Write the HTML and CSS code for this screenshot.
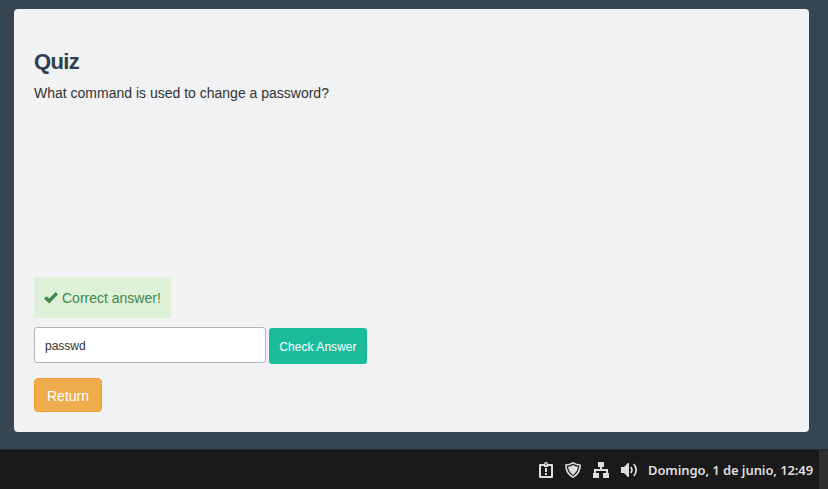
FILE: index.html
```html
<!DOCTYPE html>
<html lang="en">
<head>
<meta charset="utf-8">
<title>Quiz</title>
<link rel="stylesheet" href="styles.css">
</head>
<body>
<main class="page">
  <section class="card">
    <h1 class="title">Quiz</h1>
    <p class="question">What command is used to change a password?</p>
    <div class="feedback">
      <svg class="check" viewBox="0 0 14 12"><path d="M0 6.7 2.5 4.2 5.2 6.6 11.7 0 14 2.3 5.3 11.6Z"/></svg>
      <span>Correct answer!</span>
    </div>
    <form class="answer">
      <input class="field" type="text" value="passwd">
      <button class="submit" type="button">Check Answer</button>
    </form>
    <button class="return" type="button">Return</button>
  </section>
</main>
<footer class="taskbar">
  <div class="tray">
    <svg class="icon" width="14" height="16" viewBox="0 0 14 16"><path fill-rule="evenodd" d="M1 2h4a2 2 0 0 1 4 0H13q1 0 1 1v12q0 1-1 1H1q-1 0-1-1V3q0-1 1-1ZM2 4v10h10V4H9v1H5V4ZM6.300 1.500v1.200h1.400v-1.200ZM6 6h2v4H6ZM6 11h2v2H6Z"/></svg>
    <svg class="icon" width="16" height="16" viewBox="0 0 16 16"><path fill-rule="evenodd" d="M8 0Q11.5 2.2 16 2.4 16 12 8 16 0 12 0 2.4 4.500 2.200 8 0ZM8 1.700Q5 3.300 1.600 3.700 2.300 10.900 8 14.300 13.700 10.900 14.400 3.700 11 3.300 8 1.700Z"/><path d="M8 3Q10.300 4.500 13 4.800 12.400 10 8 13 3.600 10 3 4.800 5.700 4.500 8 3Z"/></svg>
    <svg class="icon" width="16" height="16" viewBox="0 0 16 16"><path d="M5 0h6v5H9v2h6v4h1v5h-6v-5h3V9H3v2h3v5H0v-5h1V7h6V5H5Z"/></svg>
    <svg class="icon" width="17" height="14" viewBox="0 0 17 14"><path d="M0 4h3l4-4h1v14H7l-4-4H0Z"/><path class="wave" d="M9.800 4q2.200 3 0 6M12.800 1q4.800 6 0 12"/></svg>
  </div>
  <time class="clock">Domingo, 1 de junio, 12:49</time>
  <div class="edge"></div>
</footer>
</body>
</html>
```
FILE: styles.css
```css
* { box-sizing: border-box; }
body {
  margin: 0;
  height: 489px;
  display: flex;
  flex-direction: column;
  overflow: hidden;
  background: #364652;
  font-family: "Liberation Sans", Arial, sans-serif;
  color: #333;
}
.page { height: 449px; padding: 9px 19px 17px 14px; }
.card {
  height: 423px;
  padding: 40px 20px 20px;
  display: flex;
  flex-direction: column;
  align-items: flex-start;
  background: #f0f2f4;
  border-radius: 4px;
}
.title { margin: 0; font-size: 22px; line-height: 25px; font-weight: bold; letter-spacing: -0.6px; color: #2c3e50; }
.question { margin: 9px 0 0; font-size: 14px; line-height: 20px; }
.feedback {
  margin-top: auto;
  height: 41px;
  width: 137px;
  padding: 1px 0 0 10px;
  display: flex;
  align-items: center;
  gap: 4px;
  background: #dff0d8;
  color: #3c8a4a;
  font-size: 14px;
  line-height: 20px;
  white-space: nowrap;
}
.check { width: 14px; height: 12px; flex: none; fill: currentColor; }
.answer { display: flex; gap: 3px; margin: 9px 0 14px; }
.field {
  width: 232px;
  height: 36px;
  padding: 2px 10px 0;
  border: 1px solid #b5b7ba;
  border-radius: 3px;
  background: #fff;
  color: #333;
  font: 12px "Liberation Sans", Arial, sans-serif;
}
.submit {
  width: 98px;
  height: 36px;
  margin-top: 1px;
  padding: 2px 0 0;
  border: 0;
  border-radius: 3px;
  background: #1abc9c;
  color: #fff;
  font: 12px "Liberation Sans", Arial, sans-serif;
  letter-spacing: 0.05px;
}
.return {
  width: 68px;
  height: 34px;
  padding: 2px 0 0;
  border: 1px solid #ee9f30;
  border-radius: 4px;
  background: #f0ad4e;
  color: #fff;
  font: 14px "Liberation Sans", Arial, sans-serif;
}
.taskbar {
  height: 40px;
  display: flex;
  align-items: center;
  justify-content: flex-end;
  background: #1a1a1a;
  border-top: 1px solid #24292c;
}
.tray { display: flex; align-items: center; gap: 12px; margin-right: 10px; }
.icon { display: block; fill: #dedede; }
.wave { fill: none; stroke: #dedede; stroke-width: 1.7; }
.clock {
  width: 165px;
  margin-right: 6px;
  font: 600 13px "Noto Sans", "Open Sans", sans-serif;
  letter-spacing: -0.09px;
  color: #dedede;
  white-space: nowrap;
}
.edge { width: 9px; height: 100%; background: #2f2f2f; }
```
